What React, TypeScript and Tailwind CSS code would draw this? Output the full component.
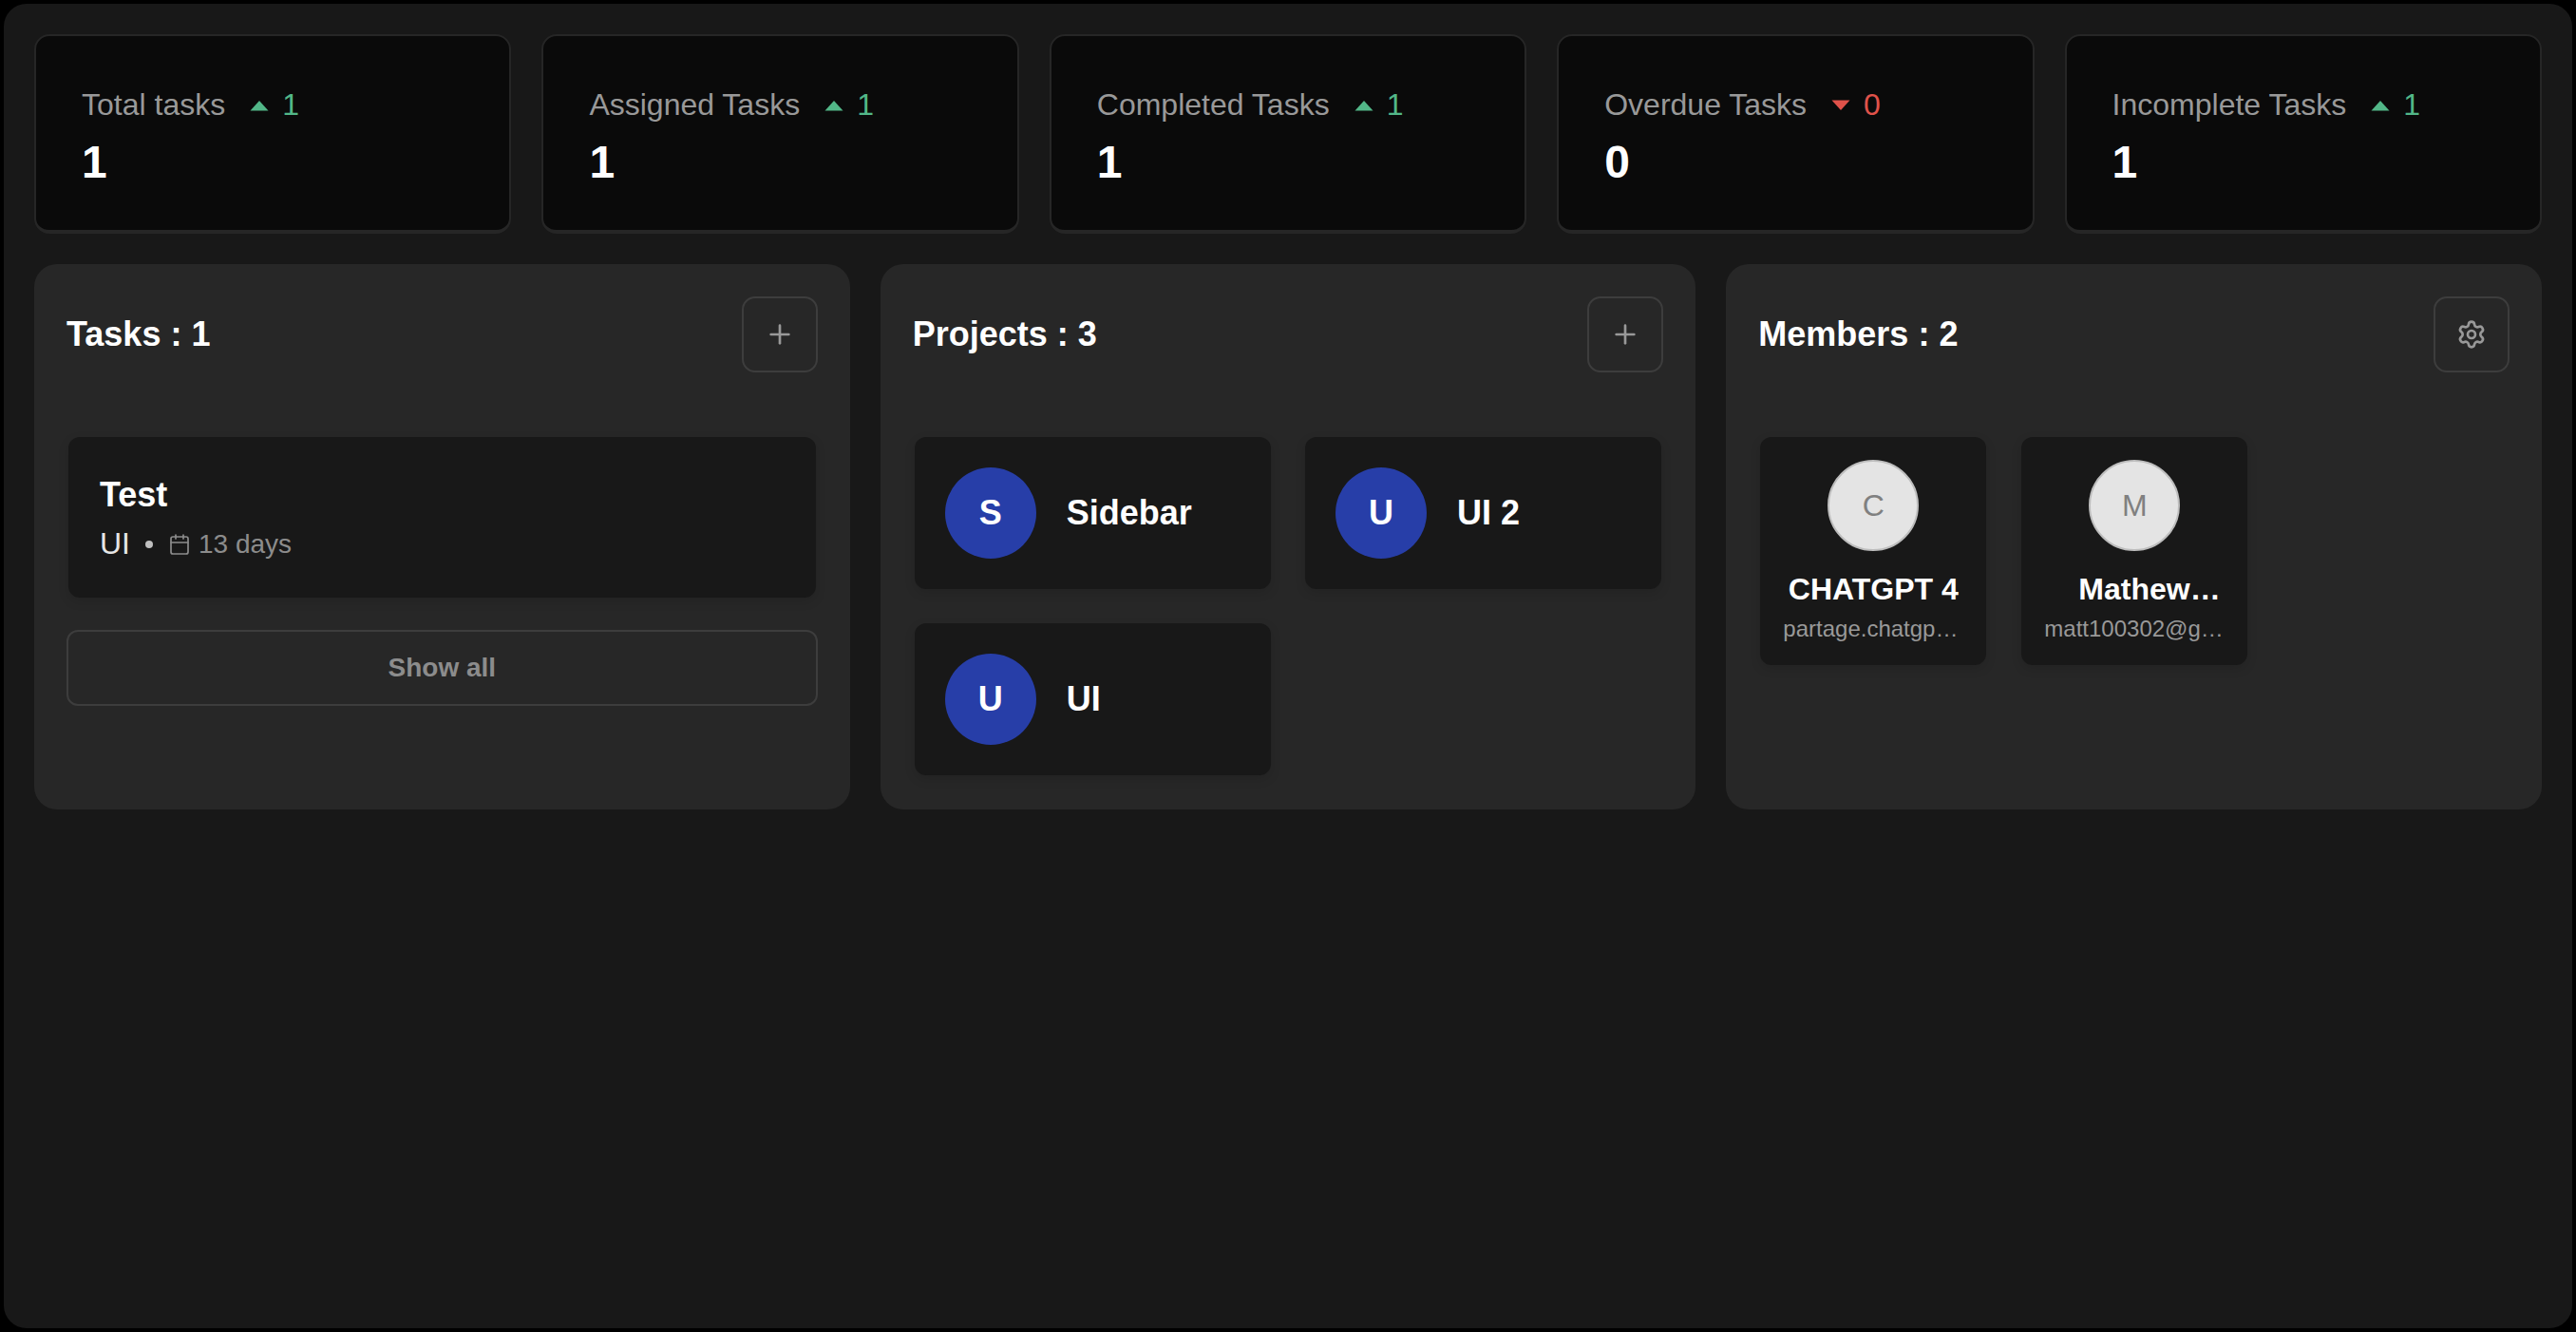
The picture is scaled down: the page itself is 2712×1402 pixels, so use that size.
import { Calendar, Plus, Settings } from "lucide-react";

const stats = [
  { label: "Total tasks", delta: 1, value: 1, up: true },
  { label: "Assigned Tasks", delta: 1, value: 1, up: true },
  { label: "Completed Tasks", delta: 1, value: 1, up: true },
  { label: "Overdue Tasks", delta: 0, value: 0, up: false },
  { label: "Incomplete Tasks", delta: 1, value: 1, up: true },
];

const projects = [
  { initial: "S", name: "Sidebar" },
  { initial: "U", name: "UI 2" },
  { initial: "U", name: "UI" },
];

const cardClass = "rounded-[12px] bg-[#181818] shadow-[0_4px_12px_rgba(0,0,0,0.12)]";

function StatCard({ label, delta, value, up }: (typeof stats)[number]) {
  return (
    <div className="h-[210px] rounded-[16px] border-2 border-b-4 border-[#262626] bg-[#0a0a0a] pl-[48px] pt-[54px]">
      <div className="flex items-center text-[32px] leading-[37px]">
        <span className="text-[#999999]">{label}</span>
        <svg
          viewBox="0 0 20 12"
          className={up ? "ml-[26px] h-[12px] w-[20px] fill-[#52b788]" : "ml-[26px] h-[12px] w-[20px] rotate-180 fill-[#e0524a]"}
        >
          <path d="M10 1 L19.5 11.5 L0.5 11.5 Z" />
        </svg>
        <span className={up ? "ml-[14px] text-[#52b788]" : "ml-[14px] text-[#e0524a]"}>{delta}</span>
      </div>
      <div className="mt-[14px] text-[48px] leading-[55px] font-bold text-white">{value}</div>
    </div>
  );
}

function PanelHeader({ title, children }: { title: string; children: React.ReactNode }) {
  return (
    <div className="flex h-[80px] items-center justify-between">
      <h2 className="text-[36px] font-bold text-white">{title}</h2>
      <button className="flex h-[80px] w-[80px] items-center justify-center rounded-[14px] border-2 border-[#3d3d3d] text-[#999999]">
        {children}
      </button>
    </div>
  );
}

function MemberCard({ initial, name, email, nameClass }: { initial: string; name: string; email: string; nameClass: string }) {
  return (
    <div className={`${cardClass} flex h-[240px] w-[238px] flex-col items-center px-[24px] pt-[24px]`}>
      <div className="flex h-[96px] w-[96px] shrink-0 items-center justify-center rounded-full border-2 border-[#bdbdbd] bg-[#e4e4e4] text-[32px] text-[#808080]">
        {initial}
      </div>
      <div className={`mt-[22px] w-full truncate text-center text-[32px] leading-[37px] font-bold text-white ${nameClass}`}>{name}</div>
      <div className="mt-[9px] w-full truncate text-center text-[24px] leading-[28px] text-[#999999]">{email}</div>
    </div>
  );
}

export default function App() {
  return (
    <div className="h-screen bg-black p-[4px] font-['Liberation_Sans',Arial,sans-serif]">
      <div className="h-full rounded-[24px] bg-[#181818] p-[32px]">
        <div className="grid grid-cols-5 gap-[32px]">
          {stats.map((s) => (
            <StatCard key={s.label} {...s} />
          ))}
        </div>

        <div className="mt-[32px] grid grid-cols-3 gap-[32px]">
          <section className="h-[574px] rounded-[24px] bg-[#272727] p-[34px]">
            <PanelHeader title="Tasks : 1">
              <Plus size={32} strokeWidth={2} />
            </PanelHeader>
            <div className="mt-[68px] px-[2px]">
              <div className={`${cardClass} h-[169px] pl-[33px] pt-[40px]`}>
                <div className="text-[36px] leading-[41px] font-bold text-white">Test</div>
                <div className="mt-[13px] flex items-center text-[28px] leading-[37px] text-[#8c8c8c]">
                  <span className="text-[32px] text-[#e6e6e6]">UI</span>
                  <span className="mx-[16px] h-[8px] w-[8px] rounded-full bg-[#bfbfbf]" />
                  <Calendar size={24} strokeWidth={1.7} className="mr-[8px]" />
                  <span>13 days</span>
                </div>
              </div>
            </div>
            <button className="mt-[34px] h-[80px] w-full rounded-[12px] border-2 border-[#3d3d3d] text-[28px] font-bold text-[#8c8c8c]">
              Show all
            </button>
          </section>

          <section className="h-[574px] rounded-[24px] bg-[#272727] p-[34px]">
            <PanelHeader title="Projects : 3">
              <Plus size={32} strokeWidth={2} />
            </PanelHeader>
            <div className="mt-[68px] grid grid-cols-2 gap-x-[36px] gap-y-[36px] px-[2px]">
              {projects.map((p) => (
                <div key={p.name} className={`${cardClass} flex h-[160px] items-center gap-[32px] pl-[32px]`}>
                  <div className="flex h-[96px] w-[96px] items-center justify-center rounded-full bg-[#273ea8] text-[36px] font-bold text-white">
                    {p.initial}
                  </div>
                  <span className="text-[36px] font-bold text-white">{p.name}</span>
                </div>
              ))}
            </div>
          </section>

          <section className="h-[574px] rounded-[24px] bg-[#272727] p-[34px]">
            <PanelHeader title="Members : 2">
              <Settings size={32} strokeWidth={2} />
            </PanelHeader>
            <div className="mt-[68px] flex gap-[37px] px-[2px]">
              <MemberCard initial="C" name="CHATGPT 4" email="partage.chatgpt@gmail.com" nameClass="" />
              <MemberCard initial="M" name="Mathew Martin" email="matt100302@gmail.com" nameClass="pl-[36px]" />
            </div>
          </section>
        </div>
      </div>
    </div>
  );
}
